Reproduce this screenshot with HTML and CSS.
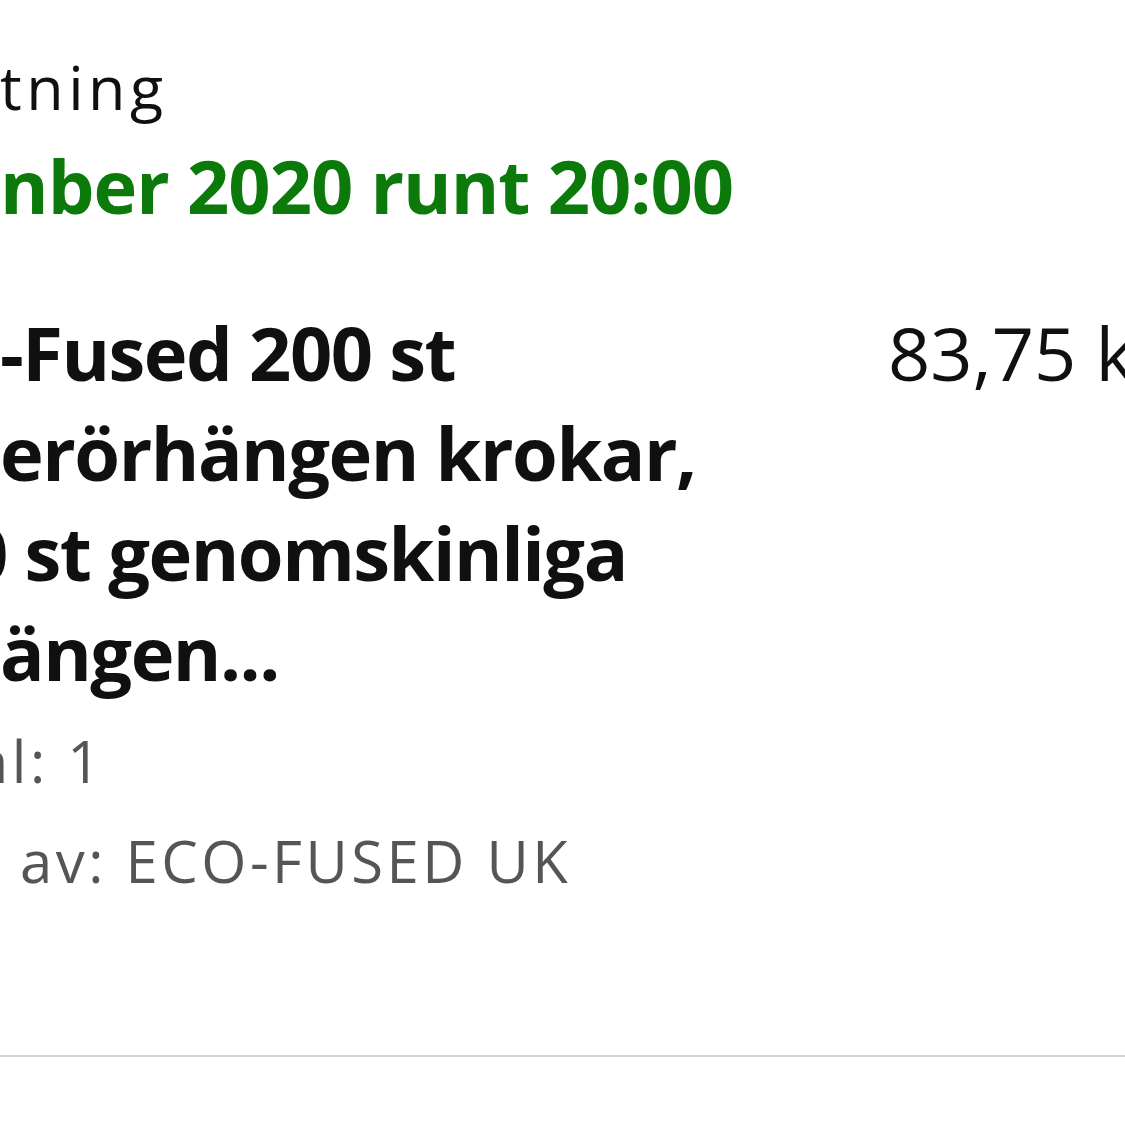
FILE: index.html
```html
<!DOCTYPE html>
<html lang="sv">
<head>
    <meta charset="UTF-8">
    <meta name="viewport" content="width=device-width, initial-scale=1.0">
    <title>Beställning</title>
    <link rel="stylesheet" href="styles.css">
</head>
<body>
    <div class="page">
        <div class="delivery">
            <div class="delivery-label">tning</div>
            <div class="delivery-date">nber 2020 runt 20:00</div>
        </div>

        <div class="item">
            <div class="item-info">
                <div class="item-title">
                    <span class="line">-Fused 200 st</span>
                    <span class="line">erörhängen krokar,</span>
                    <span class="line"><span class="cut-zero">0</span> st genomskinliga</span>
                    <span class="line">ängen...</span>
                </div>
                <div class="item-meta">
                    <span class="line"><span class="cut-a">a</span>l: 1</span>
                    <span class="line seller">av: ECO-FUSED UK</span>
                </div>
            </div>
            <div class="item-price">83,75 kr</div>
        </div>

        <hr class="divider">
    </div>
</body>
</html>
```

FILE: styles.css
```css
html, body {
    margin: 0;
    padding: 0;
    background-color: #fff;
}

body {
    font-family: "Open Sans", "Noto Sans", sans-serif;
    color: #0f1111;
    overflow: hidden;
    width: 1125px;
    height: 1123px;
}

.page {
    padding-top: 38px;
}

.delivery-label {
    font-size: 61px;
    line-height: 98px;
    letter-spacing: 4.5px;
    white-space: nowrap;
}

.delivery-date {
    font-size: 74px;
    font-weight: 700;
    line-height: 100px;
    letter-spacing: -1px;
    color: #0b7a0b;
    white-space: nowrap;
}

.item {
    display: flex;
    margin-top: 67px;
}

.item-info {
    flex: 0 0 888px;
}

.line {
    display: block;
    white-space: nowrap;
}

.item-title {
    font-size: 74px;
    font-weight: 700;
    line-height: 100px;
    letter-spacing: -1.5px;
}

.item-meta {
    margin-top: 8px;
    font-size: 58px;
    line-height: 100px;
    color: #555;
    letter-spacing: 3.5px;
}

.seller {
    padding-left: 20px;
}

.cut-zero {
    display: inline-block;
    margin-left: -34px;
}

.cut-a {
    display: inline-block;
    margin-left: -24px;
}

.item-price {
    font-size: 74px;
    line-height: 100px;
    letter-spacing: 0;
    white-space: nowrap;
}

.divider {
    border: none;
    border-top: 2px solid #d5d5d5;
    margin: 144px 0 0;
}
```
